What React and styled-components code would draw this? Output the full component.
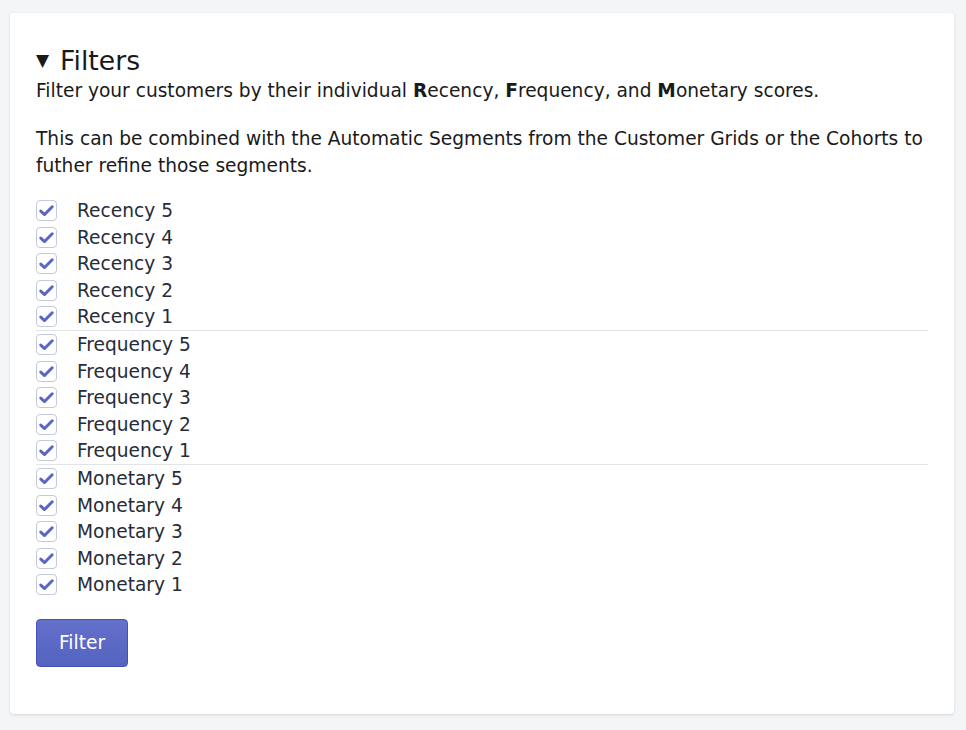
import React from 'react';
import styled, { createGlobalStyle } from 'styled-components';

const GlobalStyle = createGlobalStyle`
    html, body {
        margin: 0;
        padding: 0;
        background: #f4f5f7;
        font-family: 'DejaVu Sans', 'Noto Sans', sans-serif;
    }
`;

const groups = [
    { name: 'Recency', values: [5, 4, 3, 2, 1] },
    { name: 'Frequency', values: [5, 4, 3, 2, 1] },
    { name: 'Monetary', values: [5, 4, 3, 2, 1] },
];

const Check = () => (
    <svg width="17" height="17" viewBox="0 0 14 14" fill="none">
        <path
            d="M2.3 7.5 L5.4 10.3 L11.7 3.9"
            stroke="#5a66c6"
            strokeWidth="2.5"
            strokeLinecap="round"
            strokeLinejoin="round"
        />
    </svg>
);

const App = () => {
    return (
        <Page>
            <GlobalStyle />
            <Card>
                <Heading>
                    <Caret>▼</Caret>
                    Filters
                </Heading>
                <Text>
                    Filter your customers by their individual <b>R</b>ecency,{' '}
                    <b>F</b>requency, and <b>M</b>onetary scores.
                </Text>
                <Text $last>
                    This can be combined with the Automatic Segments from the
                    Customer Grids or the Cohorts to futher refine those
                    segments.
                </Text>
                <List>
                    {groups.map((group) => (
                        <Group key={group.name}>
                            {group.values.map((v) => (
                                <Row key={v}>
                                    <Box>
                                        <Check />
                                    </Box>
                                    <Label>
                                        {group.name} {v}
                                    </Label>
                                </Row>
                            ))}
                        </Group>
                    ))}
                </List>
                <Button>Filter</Button>
            </Card>
        </Page>
    );
};

const Page = styled.div`
    padding: 13px 12px 16px 10px;
`;

const Card = styled.div`
    background: #fff;
    border-radius: 4px;
    box-shadow: 0 1px 3px rgba(0, 0, 0, 0.12);
    padding: 32px 26px 44px 26px;
    box-sizing: border-box;
    height: 701px;
`;

const Heading = styled.h2`
    margin: 0 0 2px;
    font-size: 26.7px;
    line-height: 31px;
    font-weight: normal;
    color: #1a1a1a;
    display: flex;
    align-items: center;
`;

const Caret = styled.span`
    font-size: 17px;
    margin-right: 11px;
`;

const Text = styled.p`
    margin: 0 0 ${({ $last }) => ($last ? '18px' : '22px')};
    font-size: 18.6px;
    line-height: 26.4px;
    color: #1a1a1a;
    b {
        font-weight: bold;
    }
`;

const List = styled.div`
    display: flex;
    flex-direction: column;
`;

const Group = styled.div`
    & + & {
        border-top: 1px solid #e2e4e8;
    }
`;

const Row = styled.div`
    display: flex;
    align-items: center;
    height: 26.6px;
`;

const Box = styled.span`
    width: 21px;
    height: 21px;
    box-sizing: border-box;
    border: 1px solid #c3c9de;
    border-radius: 4px;
    display: flex;
    align-items: center;
    justify-content: center;
    margin-right: 20px;
`;

const Label = styled.span`
    font-size: 18.6px;
    color: #262c38;
`;

const Button = styled.button`
    margin-top: 21px;
    font-family: inherit;
    font-size: 18.6px;
    line-height: 26px;
    padding: 10px 22px;
    color: #fff;
    background: linear-gradient(#6371cb, #5563c1);
    border: 1px solid #4452b4;
    border-radius: 4px;
`;

export default App;
